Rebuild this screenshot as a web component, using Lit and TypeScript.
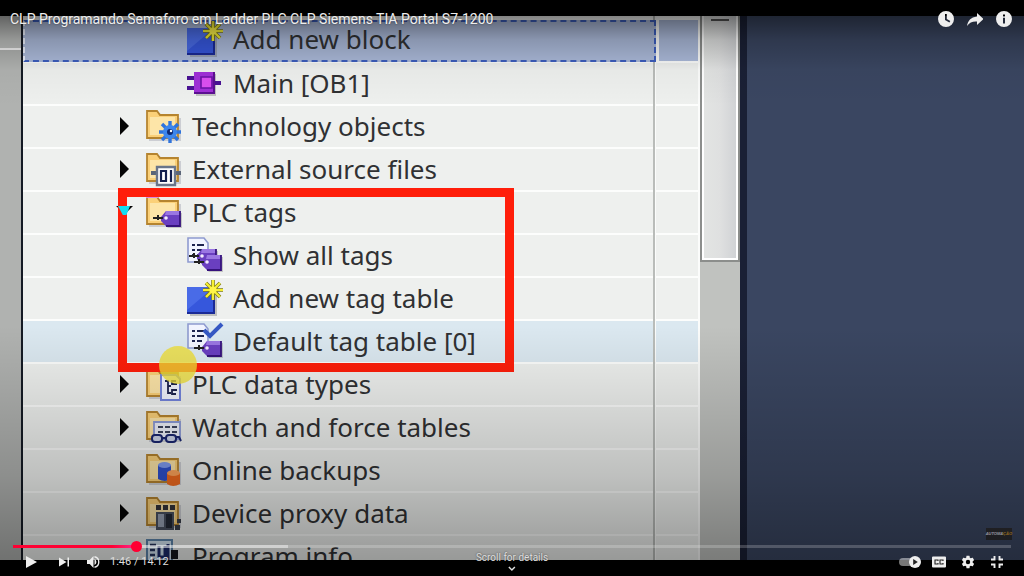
import { LitElement, html, svg, css, nothing } from "lit";
import type { SVGTemplateResult } from "lit";
import { customElement, property, state } from "lit/decorators.js";
import { classMap } from "lit/directives/class-map.js";

const folder = svg`
  <path d="M3 33V5h11l3 5h18v23z" fill="#8b8fa0" opacity=".35"/>
  <path d="M1 30V3h10l3 4h18v23z" fill="#fbd078"/>
  <path d="M4 27V9h25v18z" fill="#fde5a8"/>
  <path d="M1 30V3h10l3 4h18v23z" fill="none" stroke="#b5842f" stroke-width="1.8"/>`;

const pinkTab = svg`<path d="M0 1h12v3H0z" fill="#d68be0"/>`;

const tag = (x: number, y: number) => svg`
  <g transform="translate(${x} ${y})">
    <path d="M3 9 8 3h14v15H8L3 13z" fill="#777" opacity=".35"/>
    <path d="M1 7 6 1h14v15H6L1 11z" fill="#6a3fc0"/>
    <path d="M6 1h14v4H5z" fill="#9a76e2"/>
    <path d="M6 16h14V1" fill="none" stroke="#36127c" stroke-width="1.8"/>
    <path d="M-7 8h10M-2 5v5" stroke="#222" stroke-width="2"/>
    <circle cx="6" cy="8" r="1.8" fill="#f4ecff"/>
  </g>`;

const page = svg`
  <path d="M1 1h16l4 5v19H1z" fill="#f1f4ff" stroke="#8f9bd0" stroke-width="1.600"/>
  <path d="M5 8h3M10 8h7M5 13h3M10 13h7M5 18h3M10 18h5" stroke="#1d2450" stroke-width="2"/>`;

const newBlock = svg`
  <path d="M3 9h27v27H3z" fill="#777" opacity=".4"/>
  <path d="M0 7h27v27H0z" fill="#3657dc"/>
  <path d="M0 7h27L0 30z" fill="#5778ee" opacity=".6"/>
  <path d="M0 33h27V7" fill="none" stroke="#1a2a96" stroke-width="2"/>
  <path d="M26 0v20M16 10h20M19 3l14 14M33 3 19 17" stroke="#7d7a18" stroke-width="3.600"/>
  <path d="M26 0v20M16 10h20M19 3l14 14M33 3 19 17" stroke="#f6f032" stroke-width="2.200"/>
  <circle cx="26" cy="10" r="3.600" fill="#fff54a"/>`;

const ART: Record<string, SVGTemplateResult> = {
  newBlock,
  main: svg`
    <path d="M9 9h20v22H9z" fill="#777" opacity=".4"/>
    <path d="M0 13h8M0 23h8M26 18h8" stroke="#4a1294" stroke-width="4"/>
    <path d="M7 7h20v22H7z" fill="#a02fd8"/>
    <path d="M7 28h20V7" fill="none" stroke="#5c1092" stroke-width="2"/>
    <path d="M14 12h11v11H14z" fill="#dc4ff2" stroke="#6a12a6" stroke-width="1.600"/>`,
  technology: svg`${folder}
    <g transform="translate(24 24)">
      <path d="M0-11V11M-11 0H11M-8-8 8 8M8-8-8 8" stroke="#2f74dc" stroke-width="3.400"/>
      <circle r="7" fill="#3d86ec"/><circle r="3" fill="#0e2a74"/><circle cx="1" cy="-1" r="1.200" fill="#fff"/>
    </g>`,
  external: svg`${folder}
    <path d="M5 22h30" stroke="#5b6678" stroke-width="4"/>
    <path d="M11 16h18v18H11z" fill="#fff" stroke="#69758a" stroke-width="2.400"/>
    <path d="M15 20h5v10h-5zM25 19v12" fill="none" stroke="#14204e" stroke-width="2.200"/>`,
  tags: svg`${folder}${pinkTab}${tag(14, 16)}`,
  showTags: svg`${page}${tag(9, 11)}${tag(14, 17)}`,
  defaultTags: svg`${page}
    <path d="m17 7 6 6L35 1" fill="none" stroke="#3558c4" stroke-width="4"/>${tag(14, 17)}`,
  types: svg`${folder}${pinkTab}
    <path d="M15 9h15l4 4v21H15z" fill="#f2f5ff" stroke="#7384dc" stroke-width="2"/>
    <path d="M19 15h3v12h3M22 20h3M26 14v5M26 18h5M26 15h4M26 23v6M26 24h5M26 28h4" fill="none" stroke="#1d2450" stroke-width="1.800"/>`,
  watch: svg`${folder}
    <path d="M8 13h26v17H8z" fill="#eef1fa" stroke="#8b9ad6" stroke-width="1.800"/>
    <path d="M12 18h5M19 18h5M26 18h5M12 23h5M19 23h5M26 23h5" stroke="#3c435c" stroke-width="2"/>
    <rect x="6" y="26" width="10" height="7" rx="3" fill="#cdd5ea" stroke="#1b2770" stroke-width="2"/>
    <rect x="20" y="26" width="10" height="7" rx="3" fill="#cdd5ea" stroke="#1b2770" stroke-width="2"/>
    <path d="M15 29h6M30 28h3l2 4" fill="none" stroke="#1b2770" stroke-width="2"/>`,
  online: svg`${folder}
    <path d="M12 13v14q7 4 13 0V13z" fill="#2f50cc"/><ellipse cx="18.500" cy="13" rx="6.500" ry="3" fill="#7f9bf0"/>
    <path d="M21 21v11q6 4 13 0V21z" fill="#f06a1e"/><ellipse cx="27.500" cy="21" rx="6.500" ry="3" fill="#ffa45a"/>`,
  proxy: svg`${folder}
    <path d="M10 10h5v5h-5zM17 10h5v5h-5zM24 10h5v5h-5z" fill="#33343a"/>
    <path d="M10 17h18v18H10z" fill="#4a5262"/><path d="M12 19h6v13h-6z" fill="#98a2b4"/>
    <path d="M20 19h6v14h-6z" fill="#222835"/><path d="M31 24h4v4h-4zM29 30h5v5h-5z" fill="#3a3f4a"/>`,
  info: svg`
    <path d="M1 2h25v32H1z" fill="#d9eaf8" stroke="#5f87ae" stroke-width="2"/>
    <path d="M4 7h6M4 12h5M4 17h5M4 22h5" stroke="#26345e" stroke-width="2.400"/>
    <path d="M13 8v11h6V8M22 6v16" fill="none" stroke="#1c2a6c" stroke-width="3"/>
    <path d="M25 12h7v9h-7z" fill="#15171c"/>`,
};

type Row = { label: string; art: string; level: 1 | 2; mark?: "closed" | "open"; tone?: "selected" | "hover" };

const ROWS: Row[] = [
  { label: "Add new block", art: "newBlock", level: 2, tone: "selected" },
  { label: "Main [OB1]", art: "main", level: 2 },
  { label: "Technology objects", art: "technology", level: 1, mark: "closed" },
  { label: "External source files", art: "external", level: 1, mark: "closed" },
  { label: "PLC tags", art: "tags", level: 1, mark: "open" },
  { label: "Show all tags", art: "showTags", level: 2 },
  { label: "Add new tag table", art: "newBlock", level: 2 },
  { label: "Default tag table [0]", art: "defaultTags", level: 2, tone: "hover" },
  { label: "PLC data types", art: "types", level: 1, mark: "closed" },
  { label: "Watch and force tables", art: "watch", level: 1, mark: "closed" },
  { label: "Online backups", art: "online", level: 1, mark: "closed" },
  { label: "Device proxy data", art: "proxy", level: 1, mark: "closed" },
  { label: "Program info", art: "info", level: 1 },
];

@customElement("project-row")
class ProjectRow extends LitElement {
  @property({ attribute: false }) row!: Row;

  static styles = css`
    :host { display: flex; height: 43px; flex: none; gap: 3px; }
    .cell, .side { box-sizing: border-box; background: #eef0ee; border-bottom: 2px solid #fcfdfc; }
    .cell { flex: 1; display: flex; align-items: center; padding: 0 0 2px 96px; min-width: 0; }
    .side { width: 42px; }
    .selected { background: #acbbdb; }
    .cell.selected { border: 2px dashed #3d5fc0; border-left-color: #eef3ff; padding: 0 0 4px 94px; margin: 0 -3px 1px 0; }
    .side.selected { margin-left: 3px; width: 39px; }
    .hover { background: #dbe8f0; }
    .mark { width: 10px; margin-right: 17px; flex: none; display: flex; }
    .mark svg { width: 10px; height: 18px; overflow: visible; }
    .level2 .mark { margin-right: 58px; }
    .art { width: 36px; height: 36px; margin-right: 10px; flex: none; overflow: visible; }
    .label { font: 400 26px/34px "Noto Sans", sans-serif; color: #303133; white-space: nowrap; }
  `;

  render() {
    const { label, art, level, mark, tone } = this.row;
    const toneClass = { selected: tone === "selected", hover: tone === "hover" };
    return html`
      <div class=${classMap({ cell: true, level2: level === 2, ...toneClass })}>
        <span class="mark">
          ${mark
            ? html`<svg viewBox="0 0 10 18" aria-hidden="true">
                ${mark === "closed" ? svg`<path d="M1 0 10 9 1 18z" fill="#050505"/>` : svg`<path d="M-3 3h17L6 11z" fill="#050505"/>`}
              </svg>`
            : nothing}
        </span>
        <svg class="art" viewBox="0 0 36 36" aria-hidden="true">${ART[art]}</svg>
        <span class="label">${label}</span>
      </div>
      <div class=${classMap({ side: true, ...toneClass })}></div>
    `;
  }
}

@customElement("video-frame")
class VideoFrame extends LitElement {
  static styles = css`
    :host { display: flex; position: relative; overflow: hidden; background: #3a4661; }
    .edge { width: 21px; background: #b0b2b0; border-right: 2px solid #141a24; flex: none; }
    .edge-top { height: 32px; background: #bcbebc; border-bottom: 2px solid #f4f4f4; }
    .tree { width: 677px; flex: none; box-sizing: border-box; padding-top: 4px; border-right: 2px solid #fbfcfb;
      background: linear-gradient(90deg, #fbfcfb 630px, #b9bcb9 630px, #b9bcb9 632px, #fbfcfb 632px); }
    .scroll { width: 40px; flex: none; background: #c0c2bf; }
    .thumb { box-sizing: border-box; height: 246px; border: 2px solid #8c8e8c; border-top: 0;
      background: linear-gradient(90deg, #e3e5e3, #dfe0e0 50%, #cfd1d4); box-shadow: inset 0 -2px #fff, inset 2px 0 #fff, inset -2px 0 #fff; padding-top: 3px; }
    .grip { width: 18px; height: 2px; margin: 0 auto; background: #555; }
    .gutter { width: 7px; flex: none; background: #1a2035; }
    .frame { position: absolute; left: 118px; top: 172px; width: 396px; height: 184px; box-sizing: border-box; border: 9px solid #ff1e0a; }
    .spot { position: absolute; left: 159px; top: 330px; width: 38px; height: 38px; border-radius: 50%; background: #f0df35; opacity: .78; }
    .pointer { position: absolute; left: 118px; top: 190px; width: 12px; height: 9px; background: #14dcf0; clip-path: polygon(0 0, 100% 0, 70% 100%, 40% 100%); }
    .mark { position: absolute; right: 12px; bottom: 20px; padding: 2px 0; background: #2c2c31; color: #d9d9e4;
      font: italic 700 4px/8px "Liberation Sans", sans-serif; }
    .mark b { color: #d39a2e; }
    .shade { position: absolute; inset: 0; background:
      linear-gradient(rgba(0,0,0,.48), rgba(0,0,0,.2) 24px, rgba(0,0,0,.03) 54px, transparent 90px),
      linear-gradient(transparent 310px, rgba(0,0,0,.08) 370px, rgba(0,0,0,.2) 460px, rgba(0,0,0,.36)); }
  `;

  render() {
    return html`
      <div class="edge"><div class="edge-top"></div></div>
      <div class="tree">${ROWS.map((row) => html`<project-row .row=${row}></project-row>`)}</div>
      <div class="scroll"><div class="thumb"><div class="grip"></div></div></div>
      <div class="gutter"></div>
      <div class="frame"></div>
      <div class="pointer"></div>
      <div class="spot"></div>
      <div class="mark">AUTOMA<b>ÇÃO</b></div>
      <div class="shade"></div>
    `;
  }
}

@customElement("app-root")
class AppRoot extends LitElement {
  @state() private position = 120;

  static styles = css`
    :host { display: block; height: 100vh; background: #000; color: #eee; font-family: Roboto, sans-serif; }
    .player { position: relative; height: 100%; box-sizing: border-box; padding: 16px 0; display: flex; overflow: hidden; }
    video-frame { flex: 1; }
    .top { position: absolute; inset: 0 0 auto; height: 38px; display: flex; align-items: center; justify-content: space-between; padding: 0 6px 0 10px; }
    .title { font-size: 14px; line-height: 20px; color: #eee; text-decoration: none; text-shadow: 0 0 2px rgba(0,0,0,.5); white-space: nowrap; }
    .group { display: flex; align-items: center; }
    button { width: 29px; height: 28px; padding: 0; border: 0; background: none; color: #eee; display: flex; align-items: center; justify-content: center; cursor: pointer; }
    button svg { width: 16px; height: 16px; fill: currentColor; }
    .bottom { position: absolute; inset: auto 0 0; }
    .seek { appearance: none; display: block; box-sizing: border-box; width: calc(100% - 26px); height: 12px; margin: 0 13px -4px; background: none; position: relative; }
    .seek::-webkit-slider-runnable-track { height: 3px; background:
      linear-gradient(90deg, #ff0033 80%, #ff2791) 0 0 / 12.4% 100% no-repeat,
      linear-gradient(rgba(255,255,255,.4), rgba(255,255,255,.4)) 0 0 / 27.6% 100% no-repeat, rgba(255,255,255,.2); }
    .seek::-webkit-slider-thumb { appearance: none; width: 11px; height: 11px; margin-top: -4px; border-radius: 50%; background: #ff0033; }
    .controls { display: flex; align-items: center; justify-content: space-between; padding: 0 13px; height: 28px; }
    .controls .play { width: 36px; }
    .play svg { width: 20px; height: 20px; }
    .time { font-size: 11px; line-height: 16px; margin-left: 3px; color: #ddd; }
    .auto svg { width: 24px; }
    .details { position: absolute; bottom: 4px; left: 50%; translate: -50% 0; display: flex; flex-direction: column; width: auto; height: auto; font: 10px/12px Roboto, sans-serif; color: #ddd; gap: 2px; text-shadow: 0 0 2px rgba(0,0,0,.6); }
    .details svg { width: 8px; height: 6px; }
  `;

  private seek(e: Event) {
    this.position = Number((e.target as HTMLInputElement).value);
  }

  render() {
    return html`
      <main class="player">
        <video-frame></video-frame>
        <header class="top">
          <a class="title" href="#">CLP Programando Semaforo em Ladder PLC CLP Siemens TIA Portal S7-1200</a>
          <div class="group">
            <button aria-label="Watch later"><svg viewBox="0 0 16 16"><path fill-rule="evenodd" d="M8 0a8 8 0 1 0 0 16A8 8 0 0 0 8 0zM7 3h1.800v5l3.500 2.100-.9 1.500L7 9z"/></svg></button>
            <button aria-label="Share"><svg viewBox="0 0 16 16"><path d="M10 2l6.500 6-6.500 6v-3.500C5.500 10.200 2.500 11.500 0 15 .8 9.800 3.800 6.300 10 5.500z"/></svg></button>
            <button aria-label="More info"><svg viewBox="0 0 16 16"><path fill-rule="evenodd" d="M8 0a8 8 0 1 0 0 16A8 8 0 0 0 8 0zM7 3.500h2v2H7zM7 6.800h2v5.700H7z"/></svg></button>
          </div>
        </header>
        <div class="bottom">
          <input class="seek" type="range" min="0" max="1000" aria-label="Seek" .value=${String(this.position)} @input=${this.seek} />
          <div class="controls">
            <div class="group">
              <button class="play" aria-label="Play"><svg viewBox="0 0 20 20"><path d="M5 4v12l11-6z"/></svg></button>
              <button aria-label="Next"><svg viewBox="0 0 16 16"><path d="M3 3.500v9L10.500 8zM11.500 3.500H13v9h-1.500z"/></svg></button>
              <button aria-label="Mute"><svg viewBox="0 0 16 16"><path d="M2 6v4h2.700L8.500 14V2L4.700 6zM9.500 5v6a3.300 3.300 0 0 0 0-6z"/><path d="M9.500 2.800a5.300 5.300 0 0 1 0 10.400" fill="none" stroke="currentColor" stroke-width="1.400"/></svg></button>
              <span class="time">1:46 / 14:12</span>
            </div>
            <div class="group">
              <button class="auto" role="switch" aria-checked="true" aria-label="Autoplay"><svg viewBox="0 0 24 16"><rect x="1" y="4" width="19" height="8" rx="4" opacity=".5"/><circle cx="17" cy="8" r="6"/><path d="M15.200 5v6l4.600-3z" fill="#222"/></svg></button>
              <button aria-label="Subtitles"><svg viewBox="0 0 16 16"><path d="M2 2.500h12a1 1 0 0 1 1 1v9a1 1 0 0 1-1 1H2a1 1 0 0 1-1-1v-9a1 1 0 0 1 1-1z"/><path d="M7 7V6H4v4h3V9M12 7V6H9v4h3V9" fill="none" stroke="#222" stroke-width="1.100"/></svg></button>
              <button aria-label="Settings"><svg viewBox="2 2 20 20"><path d="M19.430 12.980c.04-.32.07-.64.07-.98s-.03-.66-.07-.98l2.110-1.650c.19-.15.24-.42.12-.64l-2-3.460c-.12-.22-.39-.3-.61-.22l-2.490 1c-.52-.4-1.080-.73-1.690-.98l-.38-2.650A.49.49 0 0 0 14 2h-4c-.25 0-.46.18-.49.42l-.38 2.650c-.61.25-1.170.59-1.690.98l-2.490-1c-.23-.09-.49 0-.61.22l-2 3.460c-.13.22-.07.49.12.64l2.110 1.650c-.04.32-.07.65-.07.98s.03.66.07.98l-2.110 1.650c-.19.15-.24.42-.12.64l2 3.460c.12.22.39.3.61.22l2.490-1c.52.4 1.080.73 1.690.98l.38 2.650c.03.24.24.42.49.42h4c.25 0 .46-.18.49-.42l.38-2.650c.61-.25 1.170-.59 1.690-.98l2.490 1c.23.09.49 0 .61-.22l2-3.460c.12-.22.07-.49-.12-.64zM12 15.500a3.500 3.500 0 1 1 0-7 3.500 3.500 0 0 1 0 7z" transform="translate(12 12) scale(.78) translate(-12 -12)"/></svg></button>
              <button aria-label="Exit full screen"><svg viewBox="0 0 16 16"><path d="M2 5.500h3.500V2M14 5.500h-3.500V2M2 10.500h3.500V14M14 10.500h-3.500V14" fill="none" stroke="currentColor" stroke-width="1.900"/></svg></button>
            </div>
          </div>
        </div>
        <button class="details">Scroll for details<svg viewBox="0 0 8 6"><path d="m1 1 3 3 3-3" fill="none" stroke="currentColor" stroke-width="1.500"/></svg></button>
      </main>
    `;
  }
}
